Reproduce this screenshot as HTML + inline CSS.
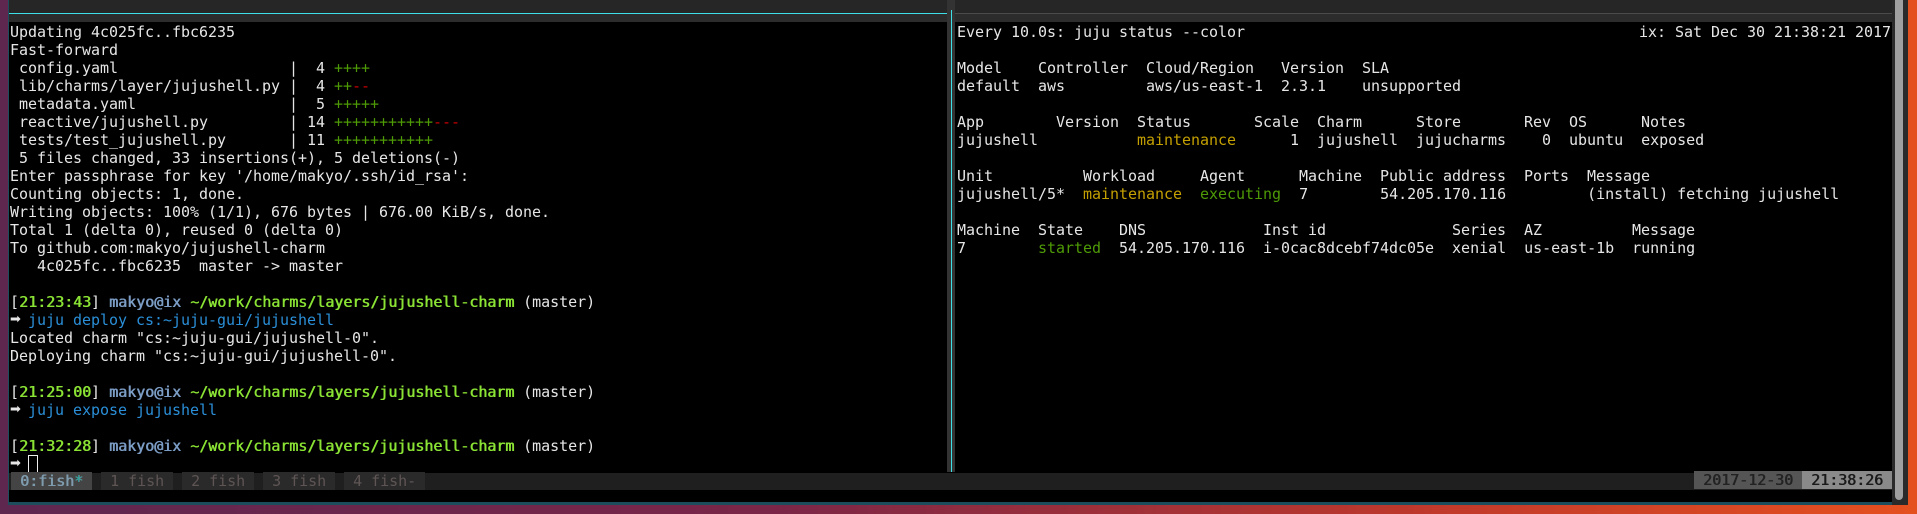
<!DOCTYPE html>
<html><head><meta charset="utf-8"><style>
*{margin:0;padding:0;box-sizing:border-box}
body{width:1917px;height:514px;overflow:hidden;position:relative;background:linear-gradient(90deg,#5e2750 0%,#7a2648 40%,#c0392b 75%,#e5501f 100%);font-family:"DejaVu Sans Mono","Liberation Mono",monospace;font-size:15px;color:#e6e6e6}
.term{position:absolute;left:8px;top:0;width:1900px;height:505px;background:#000;border-left:1px solid #1b4d5c;border-bottom:3px solid #1b4d5c}
.abs{position:absolute}
pre{font-family:inherit;font-size:15px;line-height:18px;letter-spacing:-0.03px;white-space:pre}
.l{display:block;height:18px;overflow:visible}
.g{color:#4e9a06}.r{color:#cc0000}.y{color:#c4a000}
.tg{color:#8ae234;text-shadow:0.6px 0 #8ae234}.u{color:#7b9cc4;text-shadow:0.6px 0 #7b9cc4}.c{color:#2a8fd8}
.ar{display:inline-block;width:9px;height:18px;line-height:18px;vertical-align:top;font-family:"DejaVu Sans",sans-serif;font-size:13px}
</style></head><body>
<div class="term"></div>
<div class="abs" style="left:9px;top:0;width:1883px;height:13px;background:#262626"></div>
<div class="abs" style="left:9px;top:13px;width:942px;height:1px;background:#3ee0e8"></div>
<div class="abs" style="left:951px;top:13px;width:941px;height:1px;background:#4a4a4a"></div>
<div class="abs" style="left:9px;top:14px;width:1883px;height:8px;background:#2c2c2c"></div>
<div class="abs" style="left:947px;top:0;width:8px;height:472px;background:#333"></div>
<div class="abs" style="left:951px;top:10px;width:1px;height:462px;background:#3ee0e8"></div>
<div class="abs" style="left:1892px;top:0;width:16px;height:505px;background:#2a2a2a"></div>
<div class="abs" style="left:1895px;top:0;width:8px;height:500px;background:#a0a0a0;border-radius:0 0 4px 4px"></div>
<div class="abs" style="left:1908px;top:0;width:9px;height:514px;background:#e5501f"></div>

<pre class="abs" style="left:10px;top:23px">Updating 4c025fc..fbc6235
Fast-forward
 config.yaml                   |  4 <span class="g">++++</span>
 lib/charms/layer/jujushell.py |  4 <span class="g">++</span><span class="r">--</span>
 metadata.yaml                 |  5 <span class="g">+++++</span>
 reactive/jujushell.py         | 14 <span class="g">+++++++++++</span><span class="r">---</span>
 tests/test_jujushell.py       | 11 <span class="g">+++++++++++</span>
 5 files changed, 33 insertions(+), 5 deletions(-)
Enter passphrase for key '/home/makyo/.ssh/id_rsa':
Counting objects: 1, done.
Writing objects: 100% (1/1), 676 bytes | 676.00 KiB/s, done.
Total 1 (delta 0), reused 0 (delta 0)
To github.com:makyo/jujushell-charm
   4c025fc..fbc6235  master -&gt; master</pre>
<pre class="abs" style="left:10px;top:293px"><span class="l">[<span class="tg">21:23:43</span>] <span class="u">makyo@ix</span> <span class="tg">~/work/charms/layers/jujushell-charm</span> (master)</span><span class="l"><span class="ar">➡</span> <span class="c">juju deploy cs:~juju-gui/jujushell</span></span><span class="l">Located charm "cs:~juju-gui/jujushell-0".</span><span class="l">Deploying charm "cs:~juju-gui/jujushell-0".</span><span class="l"> </span><span class="l">[<span class="tg">21:25:00</span>] <span class="u">makyo@ix</span> <span class="tg">~/work/charms/layers/jujushell-charm</span> (master)</span><span class="l"><span class="ar">➡</span> <span class="c">juju expose jujushell</span></span><span class="l"> </span><span class="l">[<span class="tg">21:32:28</span>] <span class="u">makyo@ix</span> <span class="tg">~/work/charms/layers/jujushell-charm</span> (master)</span><span class="l"><span class="ar">➡</span></span></pre>
<div class="abs" style="left:28px;top:455px;width:10px;height:18px;border:1.5px solid #eee"></div>

<pre class="abs" style="left:957px;top:23px">Every 10.0s: juju status --color

Model    Controller  Cloud/Region   Version  SLA
default  aws         aws/us-east-1  2.3.1    unsupported

App        Version  Status       Scale  Charm      Store       Rev  OS      Notes
jujushell           <span class="y">maintenance</span>      1  jujushell  jujucharms    0  ubuntu  exposed

Unit          Workload     Agent      Machine  Public address  Ports  Message
jujushell/5*  <span class="y">maintenance</span>  <span class="g">executing</span>  7        54.205.170.116         (install) fetching jujushell

Machine  State    DNS             Inst id              Series  AZ          Message
7        <span class="g">started</span>  54.205.170.116  i-0cac8dcebf74dc05e  xenial  us-east-1b  running</pre>
<pre class="abs" style="right:26px;top:23px">ix: Sat Dec 30 21:38:21 2017</pre>

<div class="abs" style="left:9px;top:473px;width:1883px;height:17px;background:#1f1f1f"></div>
<pre class="abs" style="left:11px;top:472px;line-height:18px"><span style="background:#444;color:#7f9cae;text-shadow:0.6px 0 #7f9cae"> 0:fish<span style="color:#2aa198">*</span> </span> <span style="background:#2a2a2a;color:#5f5555"> 1 fish </span> <span style="background:#2a2a2a;color:#5f5555"> 2 fish </span> <span style="background:#2a2a2a;color:#5f5555"> 3 fish </span> <span style="background:#2a2a2a;color:#5f5555"> 4 fish- </span></pre>
<pre class="abs" style="right:25px;top:472px;line-height:17px"><span style="background:#555;color:#222;text-shadow:0.6px 0 #222"> 2017-12-30 </span><span style="background:#8a8a8a;color:#1a1a1a;text-shadow:0.6px 0 #1a1a1a"> 21:38:26 </span></pre>
</body></html>
